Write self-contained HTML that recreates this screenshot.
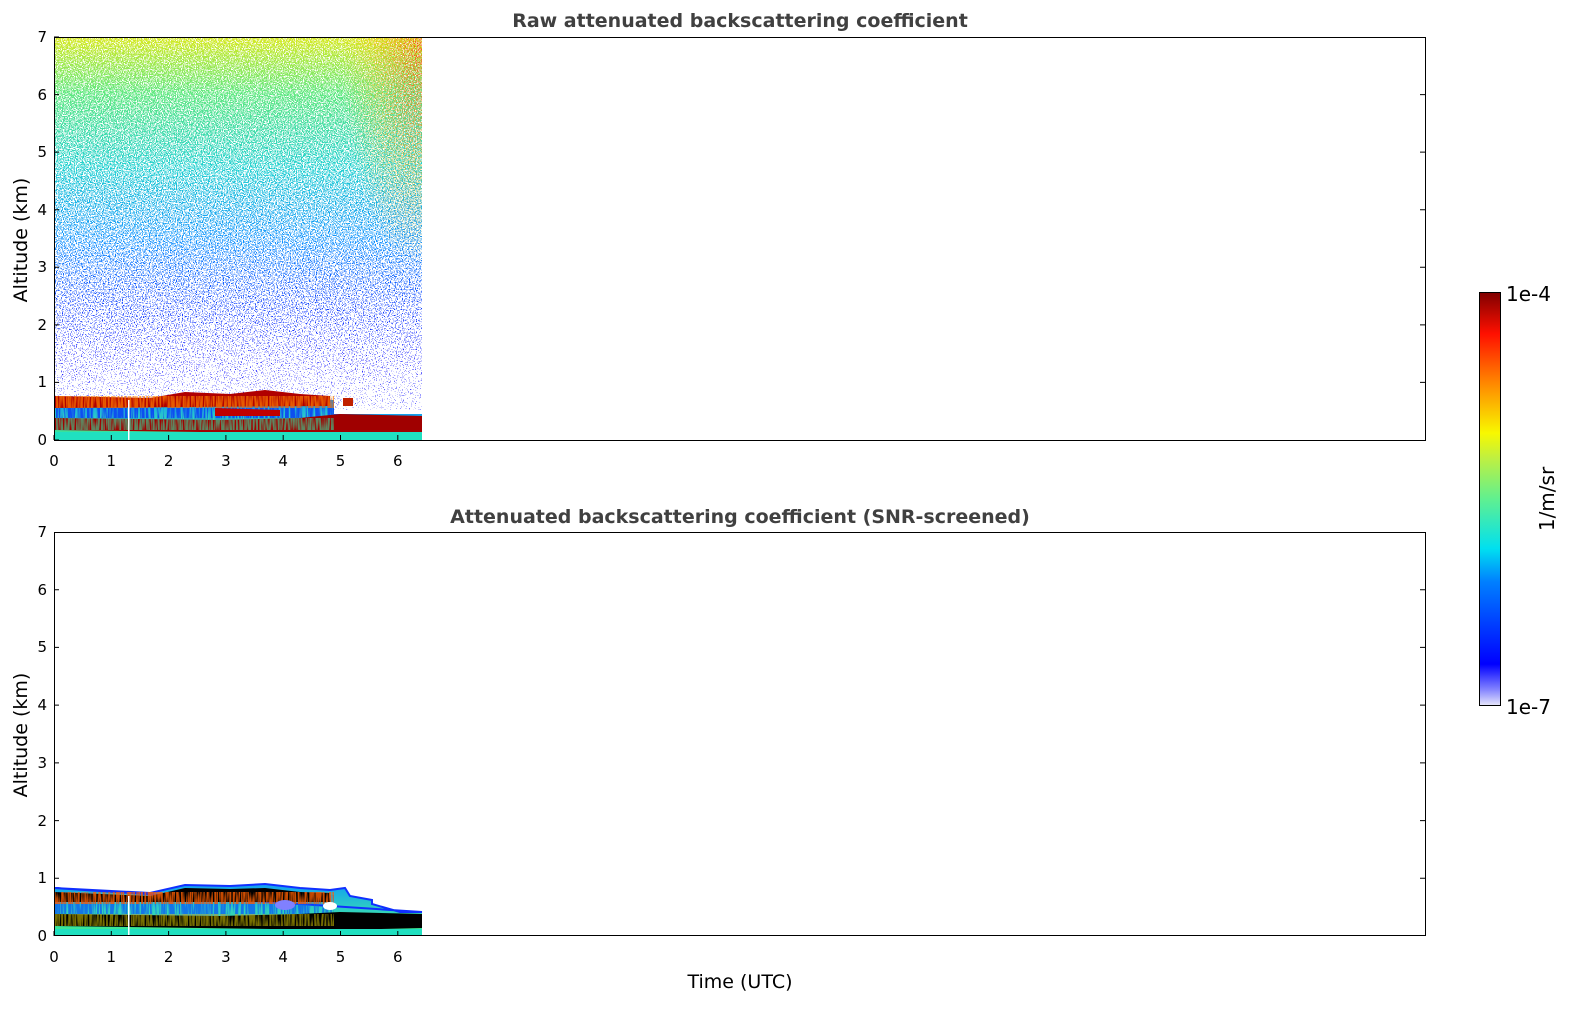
<!DOCTYPE html>
<html><head><meta charset="utf-8"><style>
html,body{margin:0;padding:0;background:#fff;overflow:hidden;}
svg{display:block;font-family:"DejaVu Sans","Liberation Sans",sans-serif;}
</style></head><body>
<svg width="1595" height="1020" viewBox="0 0 1595 1020" xmlns="http://www.w3.org/2000/svg">
<defs>
<filter id="dens" x="0" y="0" width="100%" height="100%" color-interpolation-filters="sRGB">
<feTurbulence type="fractalNoise" baseFrequency="0.85" numOctaves="2" seed="3" result="n"/>
<feColorMatrix in="n" type="matrix" values="0 0 0 0 0  0 0 0 0 0  0 0 0 0 0  1 0 0 0 0" result="na"/>
<feComposite in="na" in2="SourceAlpha" operator="arithmetic" k1="0" k2="0.5" k3="0.5" k4="0" result="s"/>
<feComponentTransfer in="s" result="m"><feFuncA type="linear" slope="60" intercept="-33"/></feComponentTransfer>
<feColorMatrix in="SourceGraphic" type="matrix" values="1 0 0 0 0  0 1 0 0 0  0 0 1 0 0  0 0 0 0 1" result="c"/>
<feComposite in="c" in2="m" operator="in"/>
</filter>
<filter id="spk" x="0" y="0" width="100%" height="100%">
<feTurbulence type="fractalNoise" baseFrequency="0.9" numOctaves="1" seed="9" result="n"/>
<feColorMatrix in="n" type="matrix" values="0 0 0 0 0  0 0 0 0 0  0 0 0 0 0  6 0 0 0 -2.8" result="a"/>
<feComposite in="SourceGraphic" in2="a" operator="in"/>
</filter>
<filter id="str" x="0" y="0" width="100%" height="100%">
<feTurbulence type="fractalNoise" baseFrequency="0.6 0.04" numOctaves="1" seed="7" result="n"/>
<feColorMatrix in="n" type="matrix" values="0 0 0 0 0  0 0 0 0 0  0 0 0 0 0  5 0 0 0 -1.8" result="a"/>
<feComposite in="SourceGraphic" in2="a" operator="in"/>
</filter>
<linearGradient id="sky" x1="0" y1="0" x2="0" y2="1">
<stop offset="0" stop-color="#d8ea20" stop-opacity="0.68"/>
<stop offset="0.15" stop-color="#60e880" stop-opacity="0.66"/>
<stop offset="0.35" stop-color="#20d0d0" stop-opacity="0.62"/>
<stop offset="0.55" stop-color="#1090ff" stop-opacity="0.58"/>
<stop offset="0.72" stop-color="#1040ff" stop-opacity="0.52"/>
<stop offset="0.88" stop-color="#2020ff" stop-opacity="0.46"/>
<stop offset="1" stop-color="#4040ff" stop-opacity="0.42"/>
</linearGradient>
<radialGradient id="skyR" cx="1" cy="0" r="1">
<stop offset="0" stop-color="#ff3000" stop-opacity="1"/>
<stop offset="0.6" stop-color="#ffb000" stop-opacity="0.6"/>
<stop offset="1" stop-color="#ffd000" stop-opacity="0"/>
</radialGradient>
<linearGradient id="cb" x1="0" y1="1" x2="0" y2="0">
<stop offset="0" stop-color="#e6e6fa"/>
<stop offset="0.04" stop-color="#8080ff"/>
<stop offset="0.1" stop-color="#0000ff"/>
<stop offset="0.3" stop-color="#0080ff"/>
<stop offset="0.38" stop-color="#00e0f0"/>
<stop offset="0.5" stop-color="#60f090"/>
<stop offset="0.6" stop-color="#c0f040"/>
<stop offset="0.66" stop-color="#f8f800"/>
<stop offset="0.78" stop-color="#ff8800"/>
<stop offset="0.9" stop-color="#ff1000"/>
<stop offset="1" stop-color="#800000"/>
</linearGradient>
<linearGradient id="low" x1="0" y1="0" x2="0" y2="1">
<stop offset="0" stop-color="#10a0f0"/>
<stop offset="0.5" stop-color="#30d0c0"/>
<stop offset="1" stop-color="#40f080"/>
</linearGradient>
</defs>

<!-- TOP PLOT -->
<text x="740" y="27" text-anchor="middle" font-size="19" font-weight="bold" fill="#404040">Raw attenuated backscattering coefficient</text>
<g>
<rect x="54" y="37" width="368" height="373" fill="url(#sky)" filter="url(#dens)"/>
<rect x="340" y="37" width="82" height="230" fill="url(#skyR)" filter="url(#spk)"/>
<rect x="54" y="400" width="280" height="40" fill="url(#low)"/>
<rect x="334" y="414" width="88" height="26" fill="url(#low)"/>
<rect x="54" y="400" width="280" height="20" fill="#1050f0" filter="url(#str)"/>
<polygon points="334,414 422,416 422,420 334,420" fill="#1060ff"/>
<polygon points="54,396 150,398 185,392 230,394 265,390 300,394 330,396 330,406 54,408" fill="#b00000"/>
<rect x="54" y="396" width="280" height="12" fill="#ff8000" filter="url(#str)" opacity="0.7"/>
<polygon points="54,418 220,420 300,418 340,414 422,416 422,432 340,434 54,430" fill="#a00000"/>
<rect x="54" y="418" width="280" height="12" fill="#30e0a0" filter="url(#str)" opacity="0.6"/>
<polygon points="215,408 280,410 280,416 215,416" fill="#c00000"/>
<rect x="343" y="398" width="10" height="8" fill="#c02000"/>
<rect x="54" y="432" width="368" height="8" fill="#20e0c0"/>
<rect x="128" y="400" width="1.5" height="40" fill="#fff"/>
</g>
<rect x="54.5" y="37.5" width="1371" height="403" fill="none" stroke="#000" stroke-width="1"/>

<!-- BOTTOM PLOT -->
<text x="740" y="523" text-anchor="middle" font-size="19" font-weight="bold" fill="#404040">Attenuated backscattering coefficient (SNR-screened)</text>
<g>
<polygon points="54,888 150,893 185,885 230,886 265,884 300,888 330,890 345,888 350,896 372,900 372,904 400,912 422,912 422,936 54,936" fill="url(#low)"/>
<polygon points="54,888 150,893 185,885 230,886 265,884 300,888 330,890 345,888 350,896 372,900 372,904 400,912 422,912" fill="none" stroke="#1030ff" stroke-width="2"/>
<rect x="54" y="895" width="280" height="22" fill="#1060f0" filter="url(#str)" opacity="0.8"/>
<polygon points="54,892 150,896 185,888 230,889 265,888 300,892 330,893 330,902 54,902" fill="#000"/>
<rect x="54" y="892" width="280" height="12" fill="#ff6000" filter="url(#str)" opacity="0.8"/>
<polygon points="54,914 220,916 300,914 340,912 422,914 422,928 340,930 54,926" fill="#000"/>
<rect x="54" y="914" width="280" height="12" fill="#f0e000" filter="url(#str)" opacity="0.5"/>
<ellipse cx="285" cy="905" rx="10" ry="5" fill="#8080ff"/>
<ellipse cx="330" cy="906" rx="7" ry="4" fill="#fff"/>
<rect x="54" y="929" width="368" height="7" fill="#20e0c0"/>
<rect x="128" y="896" width="1.5" height="40" fill="#fff"/>
</g>
<rect x="54.5" y="532.5" width="1371" height="403" fill="none" stroke="#000" stroke-width="1"/>

<!-- TICKS -->
<g stroke="#000" stroke-width="1">
<path d="M54,440v-5M111.3,440v-5M168.6,440v-5M225.9,440v-5M283.2,440v-5M340.5,440v-5M397.8,440v-5
M54,440h5M54,382.4h5M54,324.9h5M54,267.3h5M54,209.7h5M54,152.1h5M54,94.6h5M54,37h5
M1425,382.4h-5M1425,324.9h-5M1425,267.3h-5M1425,209.7h-5M1425,152.1h-5M1425,94.6h-5"/>
<path d="M54,936v-5M111.3,936v-5M168.6,936v-5M225.9,936v-5M283.2,936v-5M340.5,936v-5M397.8,936v-5
M54,878.3h5M54,820.6h5M54,762.9h5M54,705.1h5M54,647.4h5M54,589.7h5
M1425,878.3h-5M1425,820.6h-5M1425,762.9h-5M1425,705.1h-5M1425,647.4h-5M1425,589.7h-5"/>
</g>
<g font-size="15" fill="#000" text-anchor="middle">
<text x="54" y="466">0</text><text x="111.3" y="466">1</text><text x="168.6" y="466">2</text><text x="225.9" y="466">3</text><text x="283.2" y="466">4</text><text x="340.5" y="466">5</text><text x="397.8" y="466">6</text>
<text x="54" y="962">0</text><text x="111.3" y="962">1</text><text x="168.6" y="962">2</text><text x="225.9" y="962">3</text><text x="283.2" y="962">4</text><text x="340.5" y="962">5</text><text x="397.8" y="962">6</text>
</g>
<g font-size="15" fill="#000" text-anchor="end">
<text x="47" y="445">0</text><text x="47" y="387">1</text><text x="47" y="330">2</text><text x="47" y="272">3</text><text x="47" y="215">4</text><text x="47" y="157">5</text><text x="47" y="100">6</text><text x="47" y="42">7</text>
<text x="47" y="941">0</text><text x="47" y="883">1</text><text x="47" y="826">2</text><text x="47" y="768">3</text><text x="47" y="710">4</text><text x="47" y="652">5</text><text x="47" y="595">6</text><text x="47" y="537">7</text>
</g>
<text transform="translate(27,240) rotate(-90)" text-anchor="middle" font-size="19" fill="#000">Altitude (km)</text>
<text transform="translate(27,735) rotate(-90)" text-anchor="middle" font-size="19" fill="#000">Altitude (km)</text>
<text x="740" y="988" text-anchor="middle" font-size="19" fill="#000">Time (UTC)</text>

<!-- COLORBAR -->
<rect x="1479.5" y="292.5" width="21" height="413" fill="url(#cb)" stroke="#000" stroke-width="1"/>
<text x="1506" y="301" font-size="20" fill="#000">1e-4</text>
<text x="1506" y="714" font-size="20" fill="#000">1e-7</text>
<text transform="translate(1554,499) rotate(-90)" text-anchor="middle" font-size="20" fill="#000">1/m/sr</text>
</svg>
</body></html>
